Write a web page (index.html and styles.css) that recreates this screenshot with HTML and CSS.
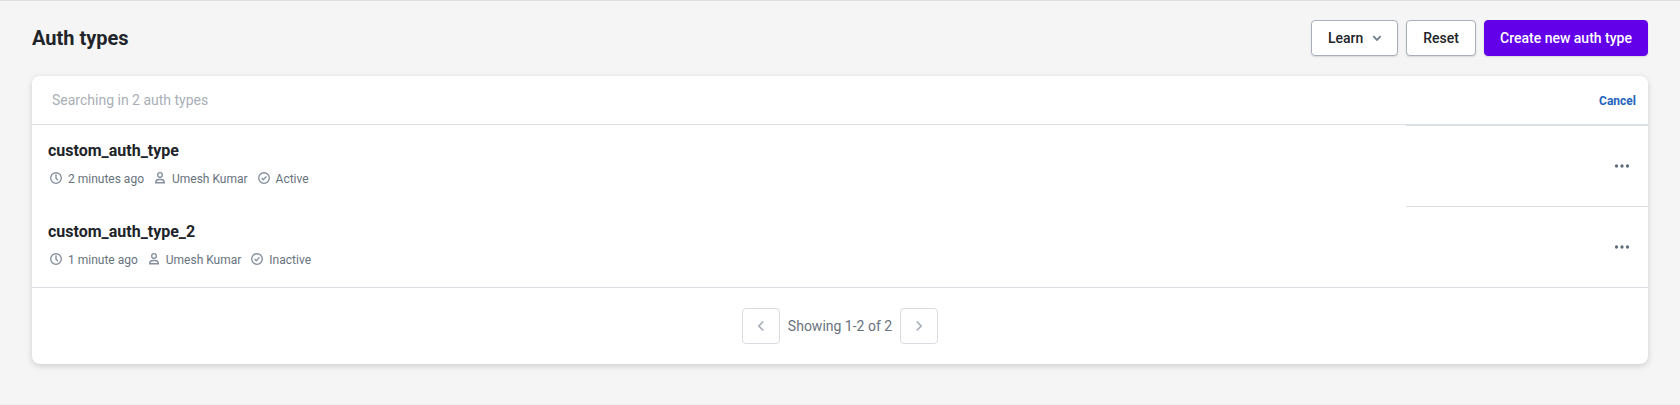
FILE: index.html
```html
<!DOCTYPE html>
<html lang="en">
<head>
<meta charset="utf-8">
<title>Auth types</title>
<link rel="stylesheet" href="styles.css">
</head>
<body>
<svg class="defs" width="0" height="0" aria-hidden="true">
  <symbol id="clock" viewBox="0 0 16 16"><circle cx="8" cy="8" r="5.3"/><path d="M8 4.600V8.200l2 2.200"/></symbol>
  <symbol id="user" viewBox="0 0 16 16"><circle cx="8" cy="4.900" r="2.300"/><path d="M3.700 12.700c0-1.900 1.300-3.200 3-3.200h2.600c1.700 0 3 1.300 3 3.200z"/></symbol>
  <symbol id="check" viewBox="0 0 16 16"><circle cx="8" cy="8" r="5.3"/><path d="M5.600 8l1.700 1.700 3.100-3.300"/></symbol>
  <symbol id="dots" viewBox="0 0 16 16"><circle cx="2.500" cy="8" r="1.650"/><circle cx="8" cy="8" r="1.650"/><circle cx="13.500" cy="8" r="1.650"/></symbol>
</svg>
<main class="page">
  <header class="header">
    <h1 class="title">Auth types</h1>
    <div class="actions">
      <button class="button learn">Learn <svg class="caret" viewBox="0 0 10 10"><path d="M1.300 3.200L5 6.900l3.700-3.700"/></svg></button>
      <button class="button reset">Reset</button>
      <button class="button primary">Create new auth type</button>
    </div>
  </header>
  <section class="card">
    <div class="search">
      <span class="placeholder">Searching in 2 auth types</span>
      <a class="cancel">Cancel</a>
    </div>
    <article class="row">
      <div class="info">
        <h2 class="name">custom_auth_type</h2>
        <div class="meta">
          <span class="item"><svg class="icon"><use href="#clock"/></svg>2 minutes ago</span>
          <span class="item"><svg class="icon"><use href="#user"/></svg>Umesh Kumar</span>
          <span class="item"><svg class="icon"><use href="#check"/></svg>Active</span>
        </div>
      </div>
      <div class="menu"><svg class="dots"><use href="#dots"/></svg></div>
    </article>
    <article class="row">
      <div class="info">
        <h2 class="name">custom_auth_type_2</h2>
        <div class="meta">
          <span class="item"><svg class="icon"><use href="#clock"/></svg>1 minute ago</span>
          <span class="item"><svg class="icon"><use href="#user"/></svg>Umesh Kumar</span>
          <span class="item"><svg class="icon"><use href="#check"/></svg>Inactive</span>
        </div>
      </div>
      <div class="menu"><svg class="dots"><use href="#dots"/></svg></div>
    </article>
    <footer class="pager">
      <button class="step"><svg class="arrow" viewBox="0 0 12 12"><path d="M8.200 1.500L3.900 6l4.300 4.500"/></svg></button>
      <span class="count">Showing 1-2 of 2</span>
      <button class="step"><svg class="arrow" viewBox="0 0 12 12"><path d="M3.800 1.500L8.100 6l-4.300 4.500"/></svg></button>
    </footer>
  </section>
</main>
</body>
</html>
```

FILE: styles.css
```css
* { box-sizing: border-box; }

body {
  margin: 0;
  background: #f5f5f5;
  color: #212429;
  font-family: Roboto, sans-serif;
  font-size: 14px;
  line-height: 20px;
}

.defs { display: block; }

.page {
  height: 405px;
  padding: 19px 32px 0;
  border-top: 1px solid #dedede;
  border-bottom: 1px solid #f0f0f0;
  overflow: hidden;
}

.header {
  display: flex;
  justify-content: space-between;
  align-items: center;
  height: 36px;
  margin-bottom: 20px;
}

.title {
  margin: 0;
  font-size: 20px;
  line-height: 28px;
  font-weight: 700;
}

.actions { display: flex; gap: 8px; }

.button {
  display: flex;
  align-items: center;
  justify-content: center;
  height: 36px;
  padding: 0;
  border: 1px solid #a9afba;
  border-radius: 4px;
  background: #fff;
  box-shadow: 0 1px 2px rgba(0, 0, 0, 0.12);
  color: #212429;
  font: 500 14px/20px Roboto, sans-serif;
  white-space: nowrap;
}

.learn {
  justify-content: flex-start;
  width: 87px;
  padding-left: 16px;
  gap: 9px;
}

.reset { width: 70px; }

.primary {
  width: 164px;
  border-color: #6200ea;
  background: #6200ea;
  color: #fff;
}

.caret { width: 10px; height: 10px; }

.caret path,
.arrow path {
  fill: none;
  stroke: #727d8b;
  stroke-width: 1.8;
}

.card {
  height: 288px;
  border-radius: 8px;
  background: #fff;
  box-shadow: 0 2px 6px rgba(0, 0, 0, 0.16);
}

.search {
  display: flex;
  justify-content: space-between;
  align-items: center;
  height: 49px;
  padding: 0 12px 0 20px;
  border-bottom: 1px solid #dadfe4;
}

.placeholder { color: #a9afb7; }

.cancel {
  padding-top: 1px;
  color: #2463bc;
  font-size: 12px;
  font-weight: 700;
}

.row { display: flex; height: 81px; }

.info { flex: 1; padding: 16px 16px 0; }

.name {
  margin: 0 0 10px;
  font-size: 16px;
  line-height: 20px;
  font-weight: 700;
}

.meta {
  display: flex;
  gap: 8px;
  color: #68727d;
  font-size: 12px;
  line-height: 16px;
}

.item { display: flex; align-items: center; gap: 4px; }

.icon {
  width: 16px;
  height: 16px;
  margin-top: -2px;
  fill: none;
  stroke: #858f9d;
  stroke-width: 1.35;
}

.menu {
  display: flex;
  align-items: center;
  justify-content: flex-end;
  width: 242px;
  padding-right: 18px;
  border-top: 1px solid #dadfe4;
}

.dots { width: 16px; height: 16px; fill: #5f6b7a; }

.pager {
  display: flex;
  align-items: center;
  justify-content: center;
  gap: 8px;
  height: 77px;
  border-top: 1px solid #dadde1;
}

.step {
  display: flex;
  align-items: center;
  justify-content: center;
  width: 38px;
  height: 36px;
  padding: 0;
  border: 1px solid #dadce1;
  border-radius: 4px;
  background: #fff;
}

.arrow { width: 12px; height: 12px; }
.arrow path { stroke: #a9b0ba; }

.count { color: #68727d; }
```
